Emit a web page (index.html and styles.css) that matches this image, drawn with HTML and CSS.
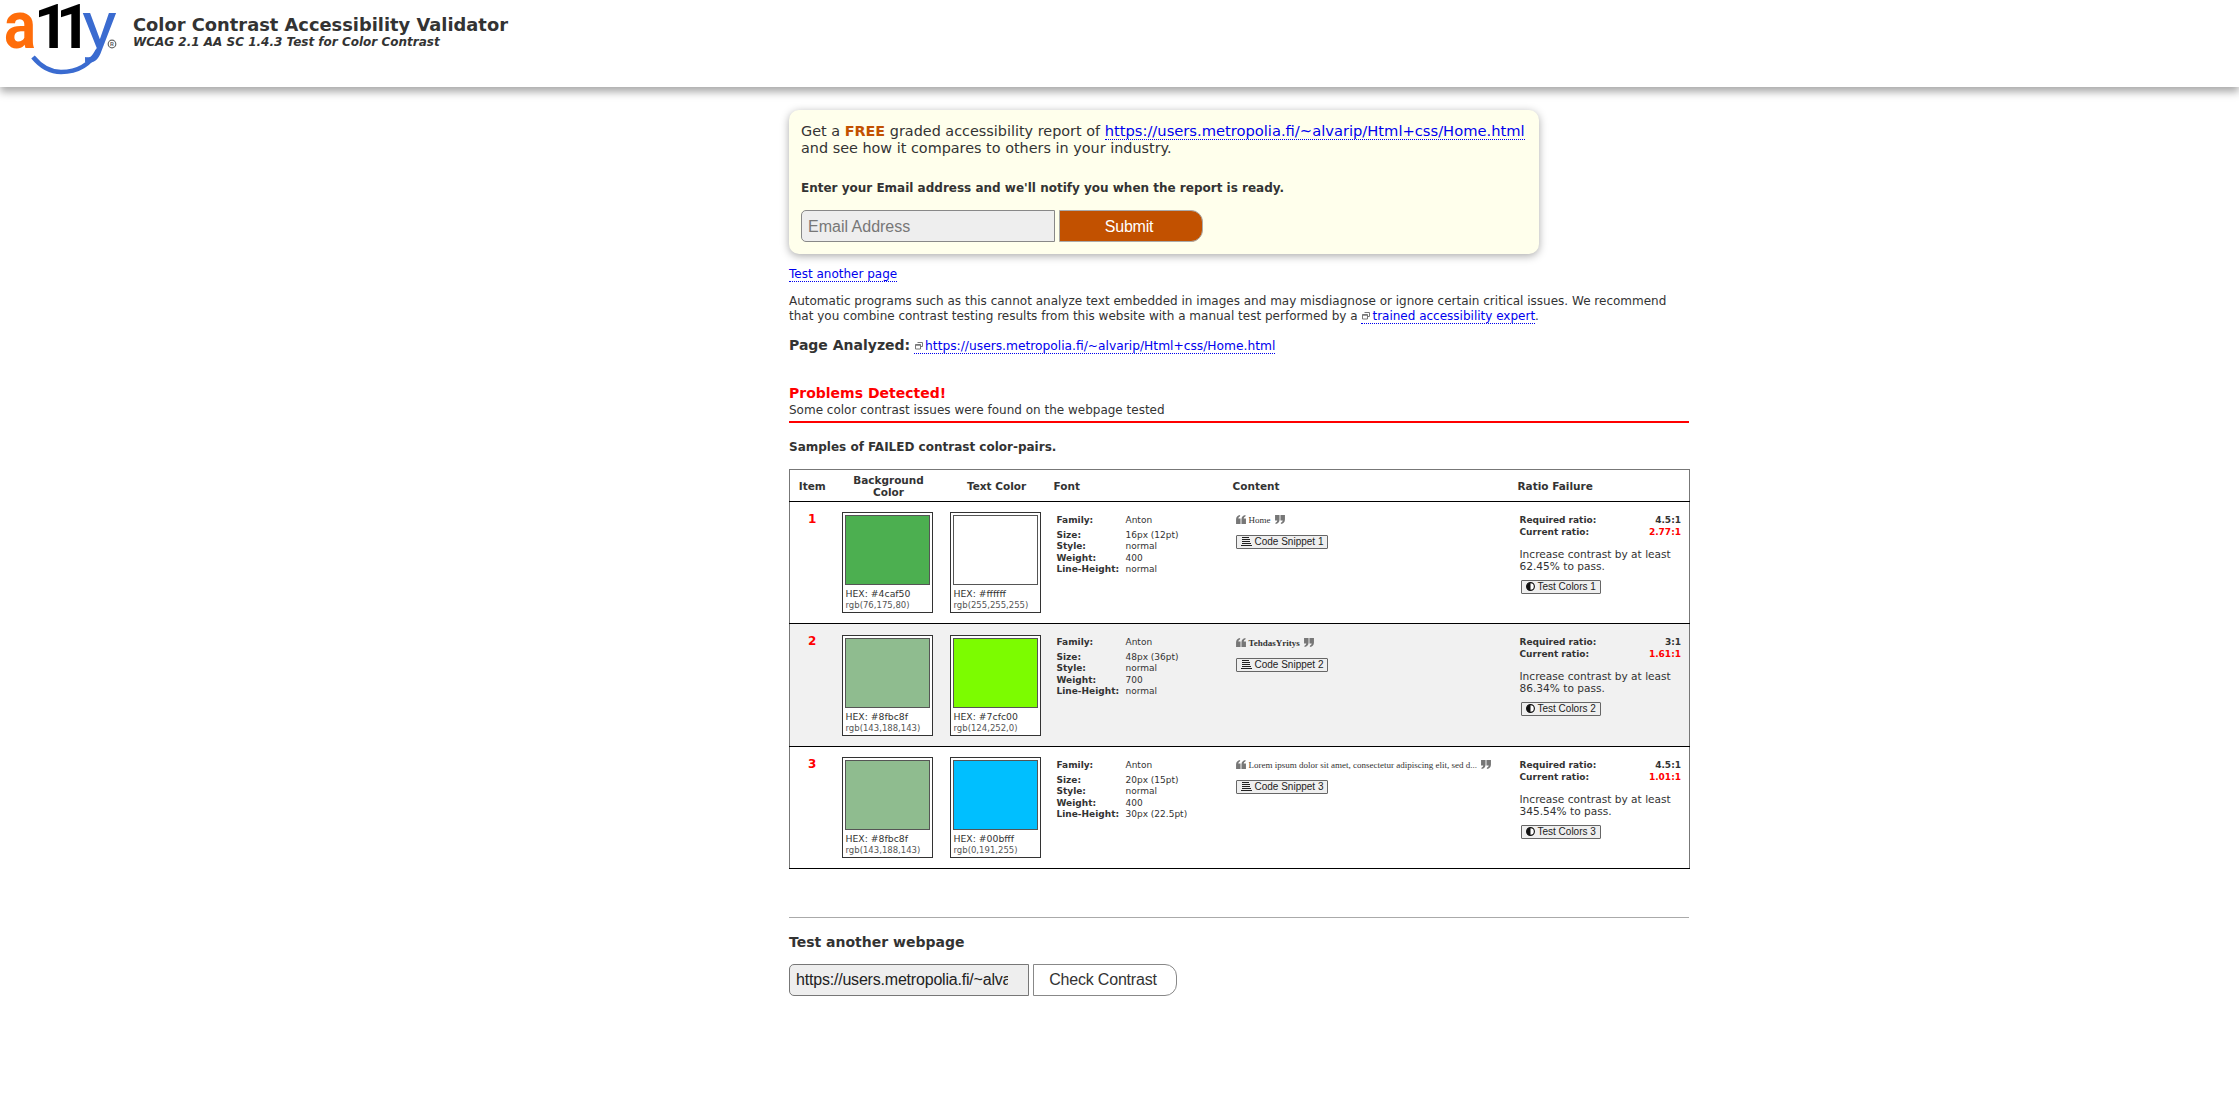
FILE: index.html
```html
<!DOCTYPE html>
<html lang="en">
<head>
<meta charset="utf-8">
<title>Color Contrast Accessibility Validator</title>
<link rel="stylesheet" href="styles.css">
</head>
<body>
<svg class="defs" width="0" height="0" aria-hidden="true">
  <symbol id="ext" viewBox="0 0 8 8"><path d="M2.500 .5h5v4h-1.500M.5 2.500h5v4.500h-5z" fill="#fff" stroke="#777" stroke-width="1"/><path d="M.5 3h5" stroke="#777" stroke-width="1.500"/></symbol>
  <symbol id="ql" viewBox="0 0 11 10"><path d="M0 5Q0 1 4.500 0v1.500Q2.500 2.300 2.500 4H5v6H0zM6 5Q6 1 10.500 0v1.500Q8.500 2.300 8.500 4H11v6H6z" fill="#777"/></symbol>
  <symbol id="qr" viewBox="0 0 11 10"><path d="M5 5Q5 9 .5 10V8.500Q2.500 7.700 2.500 6H0V0h5zM11 5Q11 9 6.500 10V8.500Q8.500 7.700 8.500 6H6V0h5z" fill="#777"/></symbol>
  <symbol id="code" viewBox="0 0 11 9"><path d="M1 0h7v1H1zM1 2h8v1H1zM1 4h8v1H1zM1 6h9v1H1zM0 8h11v1H0z" fill="#222"/></symbol>
  <symbol id="half" viewBox="0 0 10 10"><circle cx="5" cy="5" r="4.300" fill="#fff" stroke="#111" stroke-width="1.300"/><path d="M5 .7a4.300 4.300 0 0 0 0 8.600z" fill="#111"/></symbol>
</svg>

<header class="top">
  <svg class="logo" width="120" height="78" viewBox="0 0 120 78" role="img" aria-label="a11y">
    <path d="M33 57C42 68 52 72 61 72C78 72 90 65 98 50" fill="none" stroke="#3a6bd0" stroke-width="4.500"/>
    <text class="logo-a" x="4" y="48" textLength="32" lengthAdjust="spacingAndGlyphs">a</text>
    <text class="logo-1" x="34 56" y="48">11</text>
    <text class="logo-y" x="82" y="48" textLength="35" lengthAdjust="spacingAndGlyphs">y</text>
    <circle cx="112" cy="44" r="3.800" fill="none" stroke="#666" stroke-width="1.200"/>
    <text class="logo-r" x="110" y="46.300">R</text>
  </svg>
  <div class="top-text">
    <h1>Color Contrast Accessibility Validator</h1>
    <p>WCAG 2.1 AA SC 1.4.3 Test for Color Contrast</p>
  </div>
</header>

<main class="page">
  <section class="callout">
    <p class="callout-lead">Get a <strong>FREE</strong> graded accessibility report of <a href="#">https://users.metropolia.fi/~alvarip/Html+css/Home.html</a><br>and see how it compares to others in your industry.</p>
    <p class="callout-ask">Enter your Email address and we'll notify you when the report is ready.</p>
    <form class="callout-form">
      <input class="email" type="text" placeholder="Email Address">
      <button class="submit" type="button">Submit</button>
    </form>
  </section>

  <p class="again"><a href="#">Test another page</a></p>
  <p class="note">Automatic programs such as this cannot analyze text embedded in images and may misdiagnose or ignore certain critical issues. We recommend that you combine contrast testing results from this website with a manual test performed by a <a href="#"><svg class="ext"><use href="#ext"/></svg>trained accessibility expert</a>.</p>
  <p class="analyzed"><b>Page Analyzed:</b> <a href="#"><svg class="ext"><use href="#ext"/></svg>https://users.metropolia.fi/~alvarip/Html+css/Home.html</a></p>

  <div class="problems">
    <h2>Problems Detected!</h2>
    <p>Some color contrast issues were found on the webpage tested</p>
  </div>
  <h3 class="samples">Samples of FAILED contrast color-pairs.</h3>

  <table class="results">
    <colgroup><col class="c1"><col class="c2"><col class="c3"><col class="c4"><col class="c5"><col class="c6"></colgroup>
    <thead>
      <tr><th>Item</th><th>Background Color</th><th>Text Color</th><th class="left">Font</th><th class="left">Content</th><th class="left">Ratio Failure</th></tr>
    </thead>
    <tbody>
      <tr>
        <td class="num">1</td>
        <td><div class="card"><div class="sw s-green"></div><div class="hex">HEX: #4caf50</div><div class="rgb">rgb(76,175,80)</div></div></td>
        <td><div class="card"><div class="sw s-white"></div><div class="hex">HEX: #ffffff</div><div class="rgb">rgb(255,255,255)</div></div></td>
        <td class="font-cell"><dl class="font"><dt class="first">Family:</dt><dd class="first">Anton</dd><dt>Size:</dt><dd>16px (12pt)</dd><dt>Style:</dt><dd>normal</dd><dt>Weight:</dt><dd>400</dd><dt>Line-Height:</dt><dd>normal</dd></dl></td>
        <td><p class="quote"><svg class="q"><use href="#ql"/></svg>Home<svg class="q"><use href="#qr"/></svg></p><button class="mini" type="button"><svg class="i-code"><use href="#code"/></svg>Code Snippet 1</button></td>
        <td class="ratio-cell"><div class="ratio"><b>Required ratio:</b><b>4.5:1</b></div><div class="ratio"><b>Current ratio:</b><b class="bad">2.77:1</b></div><p class="inc">Increase contrast by at least 62.45% to pass.</p><button class="mini" type="button"><svg class="i-half"><use href="#half"/></svg>Test Colors 1</button></td>
      </tr>
      <tr class="alt">
        <td class="num">2</td>
        <td><div class="card"><div class="sw s-sage"></div><div class="hex">HEX: #8fbc8f</div><div class="rgb">rgb(143,188,143)</div></div></td>
        <td><div class="card"><div class="sw s-lime"></div><div class="hex">HEX: #7cfc00</div><div class="rgb">rgb(124,252,0)</div></div></td>
        <td class="font-cell"><dl class="font"><dt class="first">Family:</dt><dd class="first">Anton</dd><dt>Size:</dt><dd>48px (36pt)</dd><dt>Style:</dt><dd>normal</dd><dt>Weight:</dt><dd>700</dd><dt>Line-Height:</dt><dd>normal</dd></dl></td>
        <td><p class="quote heavy"><svg class="q"><use href="#ql"/></svg>TehdasYritys<svg class="q"><use href="#qr"/></svg></p><button class="mini" type="button"><svg class="i-code"><use href="#code"/></svg>Code Snippet 2</button></td>
        <td class="ratio-cell"><div class="ratio"><b>Required ratio:</b><b>3:1</b></div><div class="ratio"><b>Current ratio:</b><b class="bad">1.61:1</b></div><p class="inc">Increase contrast by at least 86.34% to pass.</p><button class="mini" type="button"><svg class="i-half"><use href="#half"/></svg>Test Colors 2</button></td>
      </tr>
      <tr>
        <td class="num">3</td>
        <td><div class="card"><div class="sw s-sage"></div><div class="hex">HEX: #8fbc8f</div><div class="rgb">rgb(143,188,143)</div></div></td>
        <td><div class="card"><div class="sw s-sky"></div><div class="hex">HEX: #00bfff</div><div class="rgb">rgb(0,191,255)</div></div></td>
        <td class="font-cell"><dl class="font"><dt class="first">Family:</dt><dd class="first">Anton</dd><dt>Size:</dt><dd>20px (15pt)</dd><dt>Style:</dt><dd>normal</dd><dt>Weight:</dt><dd>400</dd><dt>Line-Height:</dt><dd>30px (22.5pt)</dd></dl></td>
        <td><p class="quote"><svg class="q"><use href="#ql"/></svg>Lorem ipsum dolor sit amet, consectetur adipiscing elit, sed d...<svg class="q"><use href="#qr"/></svg></p><button class="mini" type="button"><svg class="i-code"><use href="#code"/></svg>Code Snippet 3</button></td>
        <td class="ratio-cell"><div class="ratio"><b>Required ratio:</b><b>4.5:1</b></div><div class="ratio"><b>Current ratio:</b><b class="bad">1.01:1</b></div><p class="inc">Increase contrast by at least 345.54% to pass.</p><button class="mini" type="button"><svg class="i-half"><use href="#half"/></svg>Test Colors 3</button></td>
      </tr>
    </tbody>
  </table>

  <hr class="rule">
  <h3 class="another">Test another webpage</h3>
  <form class="check">
    <input class="url" type="text" value="https://users.metropolia.fi/~alvarip/Html+css/Home.html">
    <button class="go" type="button">Check Contrast</button>
  </form>
</main>
</body>
</html>
```

FILE: styles.css
```css
* { box-sizing: border-box; }
html, body { margin: 0; padding: 0; }
body { background: #fff; color: #333; font-family: "DejaVu Sans", Verdana, sans-serif; font-size: 12px; height: 1114px; overflow: hidden; }
p, h1, h2, h3, dl, dd { margin: 0; }
a { color: #00e; text-decoration: none; border-bottom: 1px dotted #00e; }
.defs { display: block; height: 0; }

.top { height: 87px; display: flex; align-items: flex-start; background: #fff; box-shadow: 0 5px 8px #aaa; position: relative; }
.logo { display: block; flex: none; margin-right: 13px; }
.logo text { font-family: Roboto, Arial, sans-serif; }
.logo-a { font-size: 66px; font-weight: 700; fill: #ff6d0a; }
.logo-1 { font-size: 61px; font-weight: 700; fill: #000; }
.logo-y { font-size: 66px; fill: #3a6bd0; font-weight: 400; }
.logo .logo-r { font-size: 6px; font-weight: 700; fill: #666; }
.top-text { padding-top: 15px; }
.top-text h1 { font-size: 17.850px; line-height: 20px; font-weight: 700; color: #333; }
.top-text p { font-size: 12px; line-height: 14px; font-weight: 700; font-style: italic; color: #333; }

.page { width: 900px; margin-left: 789px; padding-top: 23px; }
.callout { width: 750px; height: 144px; padding: 12px 4px 12px 12px; background: #ffffec; border-radius: 10px; box-shadow: 0 2px 8px #aaa; }
.callout-lead { font-size: 14.400px; line-height: 17px; white-space: nowrap; }
.callout-lead a { font-size: 14.700px; }
.callout-lead strong { color: #c25100; }
.callout-ask { font-weight: 700; font-size: 12px; line-height: 16px; margin-top: 23px; }
.callout-form { display: flex; gap: 4px; margin-top: 14px; }
.email { width: 254px; height: 32px; background: #eee; border: 1px solid #888; border-radius: 5px 0 0 5px; padding: 1px 6px 0; font: 16px "Liberation Sans", Arial, sans-serif; }
.email::placeholder { color: #777; }
.submit { width: 144px; height: 32px; padding: 1px 4px 0 0; background: #c25100; color: #fff; border: 1px solid #aaa; border-radius: 0 12px 12px 0; font: 16px "Liberation Sans", Arial, sans-serif; letter-spacing: -.25px; }

.again { margin-top: 12px; line-height: 16px; }
.note { margin-top: 12px; line-height: 15px; }
.analyzed { margin-top: 12px; line-height: 18px; font-size: 12.250px; }
.analyzed b { font-size: 14px; }
.ext { width: 8px; height: 8px; margin: 0 2px 0 1px; }
.problems { margin-top: 28px; border-bottom: 2px solid #f00; padding-bottom: 3px; }
.problems h2 { font-size: 14px; line-height: 20px; color: #f00; }
.problems p { line-height: 15px; }
.samples { font-size: 12px; line-height: 16px; margin-top: 16px; }

.results { width: 900px; margin-top: 14px; border-collapse: collapse; table-layout: fixed; border: 1px solid #777; border-bottom-color: #000; }
.c1 { width: 45px; } .c2 { width: 108px; } .c3 { width: 108px; } .c4 { width: 179px; } .c5 { width: 285px; } .c6 { width: 175px; }
.results th { height: 32px; padding: 0 8px; font-size: 10.500px; line-height: 12px; border-bottom: 1px solid #000; vertical-align: middle; text-align: center; }
.results th.left { text-align: left; padding-left: 3px; }
.results td { height: 122px; vertical-align: top; border-bottom: 1px solid #000; padding: 10px 5px 0 7px; font-size: 10px; }
.results .alt td { background: #f1f1f1; height: 123px; padding-top: 11px; }
.results td.num { color: #f00; font-weight: 700; font-size: 12px; text-align: center; padding: 10px 0 0; }
.results td.font-cell { padding: 12px 5px 0 6px; }
.results .alt td.font-cell { padding-top: 12px; }
.results td.ratio-cell { padding: 10px 8px 0 5px; }
.results .alt td.ratio-cell { padding-top: 10px; }

.card { width: 91px; height: 101px; border: 1px solid #333; background: #fff; padding: 2px; font-size: 9px; }
.sw { height: 70px; border: 1px solid #555; }
.s-green { background: #4caf50; } .s-white { background: #fff; } .s-sage { background: #8fbc8f; } .s-lime { background: #7cfc00; } .s-sky { background: #00bfff; }
.hex { font-size: 9.300px; line-height: 12px; margin: 3px 0 0 1px; }
.rgb { font-size: 8.500px; line-height: 11px; margin: 0 0 0 1px; color: #555; }

.font { display: grid; grid-template-columns: 69px auto; font-size: 9px; line-height: 11.500px; padding-top: 1px; }
.font dt { font-weight: 700; }
.font .first { margin-bottom: 3px; }
.quote { font-family: "Liberation Serif", "Times New Roman", serif; font-size: 9px; line-height: 12px; margin: 2px 0 0 -1px; height: 12px; white-space: nowrap; }
.quote.heavy { font-weight: 700; }
.q { width: 10px; height: 9px; margin: 0 3px 0 0; vertical-align: -1px; }
.quote .q + .q, .quote .q:last-child { margin: 0 0 0 4px; }
.mini { display: block; margin: 9px 0 0 -1px; height: 14px; padding: 0 4px; background: #efefef; border: 1px solid #666; border-radius: 1px; font: 10px/12px "Liberation Sans", Arial, sans-serif; color: #222; white-space: nowrap; }
.i-code { width: 11px; height: 9px; margin-right: 3px; vertical-align: -1px; }
.i-half { width: 9px; height: 9px; margin-right: 3px; vertical-align: -1px; }
.ratio { display: flex; justify-content: space-between; font-size: 9px; line-height: 11.500px; }
.ratio:first-child { padding-top: 3px; }
.bad { color: #f00; }
.inc { font-size: 10.600px; line-height: 12px; margin-top: 10px; }
.results td .inc + .mini { margin: 8px 0 0 1px; }

.rule { margin: 48px 0 0; border: 0; border-top: 1px solid #aaa; }
.another { font-size: 14px; line-height: 18px; margin-top: 15px; }
.check { display: flex; gap: 4px; margin-top: 13px; }
.url { width: 240px; height: 32px; background: #eee; border: 1px solid #777; border-radius: 5px 0 0 5px; padding: 0 20px 0 6px; font: 16px "Liberation Sans", Arial, sans-serif; letter-spacing: -.2px; color: #222; }
.go { width: 144px; height: 32px; padding: 0 4px 0 0; background: #fff; border: 1px solid #888; border-radius: 0 12px 12px 0; font: 16px "Liberation Sans", Arial, sans-serif; letter-spacing: -.2px; color: #333; }
```
